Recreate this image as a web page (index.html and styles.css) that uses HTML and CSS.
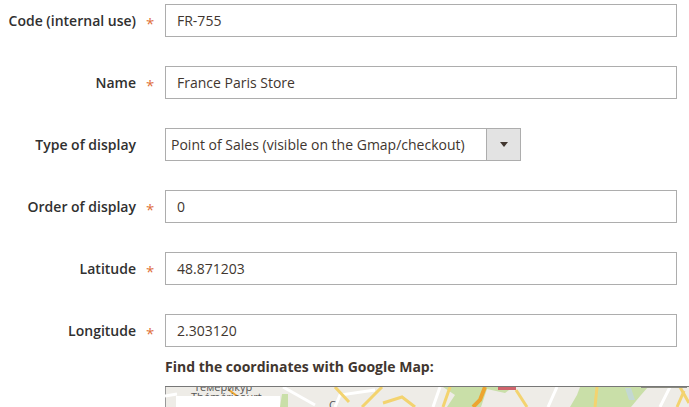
FILE: index.html
```html
<!DOCTYPE html>
<html lang="en">
<head>
  <meta charset="UTF-8" />
  <title>Store form</title>
  <link rel="stylesheet" href="styles.css">
</head>
<body>
  <form class="store-form">
    <div class="field">
      <label class="field-label">Code (internal use)</label>
      <span class="required">*</span>
      <div class="text-input">FR-755</div>
    </div>
    <div class="field">
      <label class="field-label">Name</label>
      <span class="required">*</span>
      <div class="text-input">France Paris Store</div>
    </div>
    <div class="field">
      <label class="field-label">Type of display</label>
      <span class="required"></span>
      <div class="select-input">
        <span class="select-value">Point of Sales (visible on the Gmap/checkout)</span>
        <span class="select-button"><span class="select-arrow"></span></span>
      </div>
    </div>
    <div class="field">
      <label class="field-label">Order of display</label>
      <span class="required">*</span>
      <div class="text-input">0</div>
    </div>
    <div class="field">
      <label class="field-label">Latitude</label>
      <span class="required">*</span>
      <div class="text-input">48.871203</div>
    </div>
    <div class="field">
      <label class="field-label">Longitude</label>
      <span class="required">*</span>
      <div class="text-input">2.303120</div>
    </div>
    <div class="map-block">
      <p class="map-title">Find the coordinates with Google Map:</p>
      <div class="map">
        <!-- x/y are page coords minus 165/387 -->
        <svg class="map-art" viewBox="0 0 524 20" width="524" height="20">
          <!-- parks -->
          <path class="park" d="M278 0 L348 0 L340 6 L322 2 L316 20 L282 20 L290 8 Z" />
          <path class="park" d="M412 8 L415 0 L483 0 L476 8 L466 20 L405 20 Z" />
          <path class="park" d="M117 7 L123 7 L123 20 L115 20 Z" />
          <path class="water" d="M460 1 L466 1 L470 13 L464 13 Z" />
          <!-- grey streets -->
          <path class="street" d="M275 0 L268 20" />
          <path class="street" d="M392 0 L383 20" />
          <path class="street" d="M118 0 L150 18" />
          <path class="street" d="M0 9 L12 7" />
          <path class="street" d="M170 20 L175 8 L210 3" />
          <path class="street" d="M505 0 L495 20" />
          <!-- yellow roads -->
          <path class="road" d="M170 0 L184 15" />
          <path class="road" d="M197 20 L217 0" />
          <path class="road" d="M218 16 L237 10 L250 20" />
          <path class="road" d="M285 0 L278 20" />
          <path class="road" d="M351 3 L362 20" />
          <path class="road" d="M432 0 L430 20" />
          <path class="road" d="M515 0 L524 16" />
          <path class="road" d="M512 20 L519 4" />
          <path class="road-major" d="M320 0 L315 13 L308 20" />
          <path class="road-small" d="M64 3 L72 9" />
          <rect class="poi" x="333" y="-1" width="18" height="4" />
          <rect class="label-smudge" x="476" y="0" width="46" height="1" />
          <text class="map-label" x="29" y="4">Темерикур</text>
          <text class="map-label" x="26" y="14">Thémérieourt</text>
          <text class="map-label" x="164" y="22">С</text>
        </svg>
        <div class="map-search"></div>
      </div>
    </div>
  </form>
</body>
</html>
```

FILE: styles.css
```css
body {
  margin: 0;
  background: #fff;
  color: #41362f;
  font-family: "Open Sans", sans-serif;
  font-size: 14px;
  overflow: hidden;
}

.store-form {
  padding-top: 4px;
  padding-right: 12px;
}

.field {
  display: flex;
  align-items: center;
  height: 33px;
  margin-bottom: 29px;
}

.field-label {
  width: 136px;
  text-align: right;
  font-weight: 600;
  color: #303030;
}

.required {
  width: 29px;
  height: 33px;
  padding: 5px 0 0 10px;
  box-sizing: border-box;
  color: #e0703a;
  font-size: 15px;
  line-height: 28px;
}

.text-input {
  flex: 1;
  height: 33px;
  box-sizing: border-box;
  padding: 0 11px;
  line-height: 31px;
  border: 1px solid #adadad;
}

.select-input {
  display: flex;
  width: 356px;
  height: 33px;
  box-sizing: border-box;
  line-height: 31px;
  border: 1px solid #adadad;
}

.select-value {
  flex: 1;
  padding-left: 5px;
}

.select-button {
  display: flex;
  align-items: center;
  justify-content: center;
  width: 33px;
  background: #e3e3e3;
  border-left: 1px solid #adadad;
}

.select-arrow {
  border-left: 4px solid transparent;
  border-right: 4px solid transparent;
  border-top: 5px solid #41362f;
}

.map-block {
  margin-top: -19px;
  margin-left: 165px;
  margin-right: -12px;
}

.map-title {
  margin: 0 0 10px;
  font-weight: 700;
  line-height: 19px;
}

.map {
  position: relative;
  height: 20px;
  overflow: hidden;
  background: #eeece7;
  border-top: 1px solid #777;
  box-shadow: inset 1px 0 0 #999;
}

.map-art {
  display: block;
}

.park {
  fill: #c9dfa8;
}

.water {
  fill: #c3d8d2;
}

.street {
  fill: none;
  stroke: #fff;
  stroke-width: 3;
}

.road {
  fill: none;
  stroke: #f3d36f;
  stroke-width: 3;
}

.road-major {
  fill: none;
  stroke: #eda52f;
  stroke-width: 4;
}

.road-small {
  fill: none;
  stroke: #eda52f;
  stroke-width: 2;
}

.poi {
  fill: #d0646c;
}

.label-smudge {
  fill: #8a8a80;
}

.map-label {
  fill: #555;
  font-size: 11px;
}

.map-search {
  position: absolute;
  left: 11px;
  top: 9px;
  width: 104px;
  height: 12px;
  background: #fff;
}
```
